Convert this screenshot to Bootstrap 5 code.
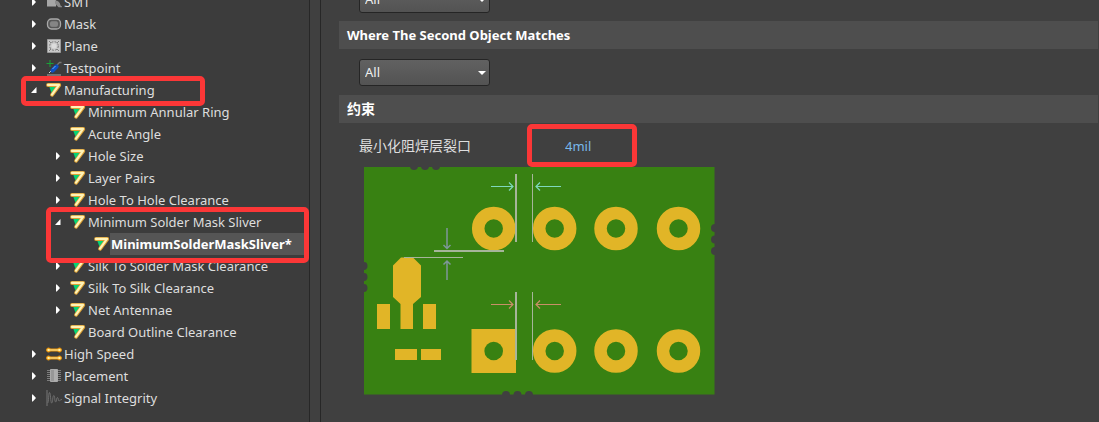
<!DOCTYPE html>
<html lang="zh-CN">
<head>
<meta charset="utf-8">
<meta name="viewport" content="width=device-width, initial-scale=1">
<title>Design Rules</title>
<link href="https://cdn.jsdelivr.net/npm/bootstrap@5.3.0/dist/css/bootstrap.min.css" rel="stylesheet">
<style>
  body { background: #404040; color: #dedede; font: 13px/22px "Noto Sans", "Noto Sans CJK SC", sans-serif; }
  .rules-pane { width: 310px; background: #3c3c3c; border-right: 1px solid #272727; }
  .splitter { width: 11px; border-right: 1px solid #272727; }
  .tree { margin-top: -9px; }
  .tree, .tree ul { list-style: none; padding: 0; }
  .tree ul { margin: 0; }
  .tree-row { height: 22px; padding-left: 28px; }
  .tree ul .tree-row { padding-left: 52px; }
  .tree ul ul .tree-row { padding-left: 76px; }
  .twisty { width: 12px; height: 12px; margin-right: 6px; }
  .twisty svg, .tree-icon { display: block; }
  .tree-icon { width: 16px; height: 16px; margin-right: 2px; }
  .tree a { color: inherit; text-decoration: none; white-space: nowrap; }
  .tree a.current { background: #555; color: #fff; font-weight: 700; width: 194px; padding-left: 1px; }
  .callout { position: absolute; border: 5px solid #fb3737; border-radius: 5px; pointer-events: none; z-index: 2; }
  .callout-parent { left: 21px; top: -3px; width: 184px; height: 30px; }
  .callout-rule { left: 46px; top: -4px; width: 263px; height: 56px; }
  .callout-value { inset: -1px 0 -1px 0; }
  .settings { padding: 0 1px 24px 18px; }
  .section-bar { background: #4e4e4e; color: #fff; font-size: 13px; font-weight: 700; line-height: 28px; padding-left: 8px; }
  .section-bar:lang(zh) { font-size: 14px; }
  .scope { padding: 10px 20px 9px; }
  .scope-first { margin-top: -24px; padding-bottom: 8px; }
  .scope .form-select {
    width: 131px; height: 27px; padding: 0 24px 1px 5px; font-size: 13px; line-height: 24px; color: #eee;
    border: 1px solid #252525; border-radius: 3px; background-color: #585858;
    background-image: url("data:image/svg+xml,%3Csvg xmlns='http://www.w3.org/2000/svg' viewBox='0 0 8 4'%3E%3Cpath d='M0 0h8L4 4z' fill='%23fff'/%3E%3C/svg%3E"), linear-gradient(#616161, #535353);
    background-position: right 3px center, 0 0; background-size: 8px 4px, 100% 100%;
  }
  .constraint { padding: 2px 0 0 20px; }
  .constraint label { width: 168px; font-size: 14px; }
  .value-box { width: 110px; height: 41px; }
  .value-box input { width: 100%; height: 41px; padding: 0 0 0 38px; border: 0; background: transparent; color: #78b9eb; font-size: 13px; }
  .board { display: block; width: 351px; height: 229px; margin-left: 25px; }
</style>
</head>
<body>
<svg class="d-none" aria-hidden="true">
  <symbol id="closed" viewBox="0 0 12 12"><path d="M4 2.500v7h.8L8 6 4.800 2.500z" fill="#fff"/></symbol>
  <symbol id="open" viewBox="0 0 12 12"><path d="M8.500 3v6H3z" fill="#fff"/></symbol>
  <symbol id="seven" viewBox="0 0 16 16">
    <path d="M3 4h10L6 12z" fill="#06d474"/>
    <path d="M2 3H13.300L6 12.800" fill="none" stroke="#dca035" stroke-width="3.800" stroke-linejoin="round" stroke-linecap="round"/>
    <path d="M2 2.900H13L6 12.600" fill="none" stroke="#fff3b8" stroke-width="2.200" stroke-linejoin="round" stroke-linecap="round"/>
  </symbol>
  <symbol id="smt" viewBox="0 0 16 16"><path d="M1 4h9v8.500H1z" fill="#a6a6a6"/><path d="M9 6.500c3 0 5 1.500 5.500 5l1.500 1v.8h-3.500L9 9.500z" fill="#8b8b8b"/></symbol>
  <symbol id="mask" viewBox="0 0 16 16"><rect x="1.500" y="3" width="13" height="10" rx="4" fill="#585858" stroke="#a8a8a8" stroke-width="1.300"/><rect x="3.500" y="4.800" width="9" height="6.500" rx="2.500" fill="#858585" stroke="#4a4a4a" stroke-width=".6"/></symbol>
  <symbol id="plane" viewBox="0 0 16 16"><path d="M1.500 1.500h13v13h-13z" fill="#c9c9c9" stroke="#9b9b9b"/><circle cx="8" cy="8" r="4.300" fill="none" stroke="#777" stroke-dasharray="2 1.400"/><circle cx="8" cy="8" r="2.500" fill="#dcdcdc"/><path d="M3 3l2 2M13 3l-2 2M3 13l2-2M13 13l-2-2" stroke="#808080"/></symbol>
  <symbol id="probe" viewBox="0 0 16 16"><path d="M1 15h14" stroke="#aaa"/><path d="M11 5l2.500-2.500h2" fill="none" stroke="#777" stroke-width="1.300"/><path d="M3 13l3-3" stroke="#ddd"/><path d="M6.500 10.500L10.500 6.500" stroke="#0d50c4" stroke-width="4.200" stroke-linecap="round"/><path d="M6.500 9l3-3" stroke="#68b8ff"/><path d="M4 0v7M.5 3.500h7" stroke="#19a238"/></symbol>
  <symbol id="speed" viewBox="0 0 16 16"><g stroke="#e8930c" fill="#e8930c"><path d="M3 4h10M3 12h10" stroke-width="3"/><circle cx="2.500" cy="4" r="2"/><circle cx="13.500" cy="4" r="2"/><circle cx="2.500" cy="12" r="2"/><circle cx="13.500" cy="12" r="2"/></g><path d="M3 4h10M3 12h10" stroke="#fff2a5" stroke-width="1.200"/><g fill="#fff2a5"><circle cx="2.500" cy="4" r="1.200"/><circle cx="13.500" cy="4" r="1.200"/><circle cx="2.500" cy="12" r="1.200"/><circle cx="13.500" cy="12" r="1.200"/></g></symbol>
  <symbol id="chip" viewBox="0 0 16 16"><path d="M1 2.500h14M1 4.500h14M1 6.500h14M1 8.500h14M1 10.500h14M1 12.500h14" stroke="#7d7d7d"/><path d="M4.500 1.500h7v12h-7z" fill="#979797" stroke="#aaa"/><path d="M8 2h3v11H8z" fill="#adadad"/></symbol>
  <symbol id="wave" viewBox="0 0 16 16"><path d="M1 0v16" stroke="#777"/><path d="M1.500 13C3 13 2.300 2.500 3.500 2.500S4.500 13 5.700 13 6.500 5.500 7.800 5.500 8.500 12 9.600 12s.7-4.500 1.800-4.500.7 3.500 1.600 3.500 1-1.500 3-1.500" fill="none" stroke="#747474" stroke-width=".9"/></symbol>
</svg>

<div class="d-flex min-vh-100">
  <nav class="rules-pane flex-shrink-0 overflow-hidden" aria-label="Design rules">
    <ul class="tree mb-0">
      <li><div class="tree-row d-flex align-items-center"><button class="twisty btn p-0 border-0" aria-label="Expand"><svg width="12" height="12"><use href="#closed"/></svg></button><svg class="tree-icon"><use href="#smt"/></svg><a href="#">SMT</a></div></li>
      <li><div class="tree-row d-flex align-items-center"><button class="twisty btn p-0 border-0" aria-label="Expand"><svg width="12" height="12"><use href="#closed"/></svg></button><svg class="tree-icon"><use href="#mask"/></svg><a href="#">Mask</a></div></li>
      <li><div class="tree-row d-flex align-items-center"><button class="twisty btn p-0 border-0" aria-label="Expand"><svg width="12" height="12"><use href="#closed"/></svg></button><svg class="tree-icon"><use href="#plane"/></svg><a href="#">Plane</a></div></li>
      <li><div class="tree-row d-flex align-items-center"><button class="twisty btn p-0 border-0" aria-label="Expand"><svg width="12" height="12"><use href="#closed"/></svg></button><svg class="tree-icon"><use href="#probe"/></svg><a href="#">Testpoint</a></div></li>
      <li>
        <div class="tree-row d-flex align-items-center position-relative"><button class="twisty btn p-0 border-0" aria-label="Collapse"><svg width="12" height="12"><use href="#open"/></svg></button><svg class="tree-icon"><use href="#seven"/></svg><a href="#">Manufacturing</a><span class="callout callout-parent"></span></div>
        <ul>
          <li><div class="tree-row d-flex align-items-center"><span class="twisty"></span><svg class="tree-icon"><use href="#seven"/></svg><a href="#">Minimum Annular Ring</a></div></li>
          <li><div class="tree-row d-flex align-items-center"><span class="twisty"></span><svg class="tree-icon"><use href="#seven"/></svg><a href="#">Acute Angle</a></div></li>
          <li><div class="tree-row d-flex align-items-center"><button class="twisty btn p-0 border-0" aria-label="Expand"><svg width="12" height="12"><use href="#closed"/></svg></button><svg class="tree-icon"><use href="#seven"/></svg><a href="#">Hole Size</a></div></li>
          <li><div class="tree-row d-flex align-items-center"><button class="twisty btn p-0 border-0" aria-label="Expand"><svg width="12" height="12"><use href="#closed"/></svg></button><svg class="tree-icon"><use href="#seven"/></svg><a href="#">Layer Pairs</a></div></li>
          <li><div class="tree-row d-flex align-items-center"><button class="twisty btn p-0 border-0" aria-label="Expand"><svg width="12" height="12"><use href="#closed"/></svg></button><svg class="tree-icon"><use href="#seven"/></svg><a href="#">Hole To Hole Clearance</a></div></li>
          <li class="position-relative">
            <div class="tree-row d-flex align-items-center"><button class="twisty btn p-0 border-0" aria-label="Collapse"><svg width="12" height="12"><use href="#open"/></svg></button><svg class="tree-icon"><use href="#seven"/></svg><a href="#">Minimum Solder Mask Sliver</a></div>
            <ul><li><div class="tree-row d-flex align-items-center"><span class="twisty"></span><svg class="tree-icon me-0"><use href="#seven"/></svg><a href="#" class="current">MinimumSolderMaskSliver*</a></div></li></ul>
            <span class="callout callout-rule"></span>
          </li>
          <li><div class="tree-row d-flex align-items-center"><button class="twisty btn p-0 border-0" aria-label="Expand"><svg width="12" height="12"><use href="#closed"/></svg></button><svg class="tree-icon"><use href="#seven"/></svg><a href="#">Silk To Solder Mask Clearance</a></div></li>
          <li><div class="tree-row d-flex align-items-center"><button class="twisty btn p-0 border-0" aria-label="Expand"><svg width="12" height="12"><use href="#closed"/></svg></button><svg class="tree-icon"><use href="#seven"/></svg><a href="#">Silk To Silk Clearance</a></div></li>
          <li><div class="tree-row d-flex align-items-center"><button class="twisty btn p-0 border-0" aria-label="Expand"><svg width="12" height="12"><use href="#closed"/></svg></button><svg class="tree-icon"><use href="#seven"/></svg><a href="#">Net Antennae</a></div></li>
          <li><div class="tree-row d-flex align-items-center"><span class="twisty"></span><svg class="tree-icon"><use href="#seven"/></svg><a href="#">Board Outline Clearance</a></div></li>
        </ul>
      </li>
      <li><div class="tree-row d-flex align-items-center"><button class="twisty btn p-0 border-0" aria-label="Expand"><svg width="12" height="12"><use href="#closed"/></svg></button><svg class="tree-icon"><use href="#speed"/></svg><a href="#">High Speed</a></div></li>
      <li><div class="tree-row d-flex align-items-center"><button class="twisty btn p-0 border-0" aria-label="Expand"><svg width="12" height="12"><use href="#closed"/></svg></button><svg class="tree-icon"><use href="#chip"/></svg><a href="#">Placement</a></div></li>
      <li><div class="tree-row d-flex align-items-center"><button class="twisty btn p-0 border-0" aria-label="Expand"><svg width="12" height="12"><use href="#closed"/></svg></button><svg class="tree-icon"><use href="#wave"/></svg><a href="#">Signal Integrity</a></div></li>
    </ul>
  </nav>
  <div class="splitter flex-shrink-0"></div>

  <main class="settings flex-grow-1 overflow-hidden">
    <div class="scope scope-first"><select class="form-select" aria-label="Where the first object matches"><option>All</option></select></div>
    <h2 class="section-bar mb-0" id="second" lang="en">Where The Second Object Matches</h2>
    <div class="scope"><select class="form-select" aria-labelledby="second"><option>All</option></select></div>
    <h2 class="section-bar mb-0">约束</h2>
    <div class="constraint d-flex align-items-center">
      <label for="sliver">最小化阻焊层裂口</label>
      <div class="value-box position-relative"><input id="sliver" type="text" value="4mil"><span class="callout callout-value"></span></div>
    </div>
    <svg class="board" viewBox="364 166 351 229" role="img" aria-label="Solder mask sliver diagram">
      <path d="M364 167H714.500V394.500H364z" fill="#388112"/>
      <g fill="#404040">
        <circle cx="414" cy="166" r="4"/><circle cx="425" cy="166" r="4"/><circle cx="436" cy="166" r="4"/>
        <circle cx="506" cy="395" r="4"/><circle cx="517.500" cy="395" r="4"/><circle cx="529" cy="395" r="4"/>
        <circle cx="363.500" cy="266" r="4"/><circle cx="363.500" cy="277" r="4"/><circle cx="363.500" cy="288" r="4"/>
        <circle cx="715" cy="228" r="4"/><circle cx="715" cy="239.500" r="4"/><circle cx="715" cy="251" r="4"/>
      </g>
      <g fill="none" stroke="#e1b527" stroke-width="12.500">
        <circle cx="493.700" cy="228.500" r="15.500"/><circle cx="554.700" cy="228.500" r="15.500"/><circle cx="616" cy="228.500" r="15.500"/><circle cx="678.500" cy="228.500" r="15.500"/>
        <circle cx="554.700" cy="351" r="15.500"/><circle cx="616" cy="351" r="15.500"/><circle cx="678.500" cy="351" r="15.500"/>
      </g>
      <g fill="#e1b527">
        <path d="M471.500 329H516v44H471.500z"/>
        <path d="M377 304h13v25h-13zM423 304h13v25h-13zM395 349h22v11h-22zM421 349h20v11h-20z"/>
        <path d="M401 257.500h12l8 8V297l-8 7v25h-12.500v-25L393 297v-31.500z"/>
      </g>
      <circle cx="493.700" cy="351" r="9.300" fill="#388112"/>
      <g fill="none" stroke="#a6b59a">
        <path d="M516 174v68M516 292v68M434 251h70" stroke-width="2"/>
        <path d="M532.500 174v68M532.500 292v68M404 257.500h59"/>
      </g>
      <g fill="none" stroke="#7fd8bd"><path d="M491 186.500h22M509 182.500l4 4-4 4M561 186.500h-25M540 182.500l-4 4 4 4" stroke-width="1.200"/></g>
      <g fill="none" stroke="#c88f68"><path d="M491 304.500h22M509 300.500l4 4-4 4M561 304.500h-25M540 300.500l-4 4 4 4" stroke-width="1.200"/></g>
      <g fill="none" stroke="#7d9799"><path d="M447 228v20M443.500 245l3.500 3.500 3.500-3.500M447 280v-19M443.500 264.500l3.500-3.500 3.500 3.500" stroke-width="1.500"/></g>
    </svg>
  </main>
</div>
<script src="https://cdn.jsdelivr.net/npm/bootstrap@5.3.0/dist/js/bootstrap.bundle.min.js"></script>
</body>
</html>
